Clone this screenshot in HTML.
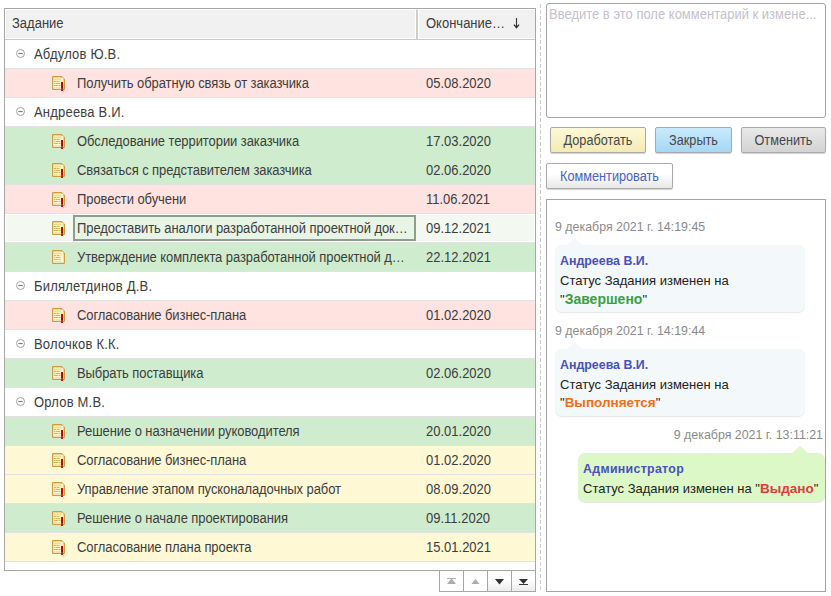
<!DOCTYPE html>
<html><head><meta charset="utf-8">
<style>
*{box-sizing:border-box;margin:0;padding:0}
html,body{width:831px;height:596px;overflow:hidden;background:#fff}
body{position:relative;font-family:"Liberation Sans",sans-serif;font-size:13px;color:#333}
.abs{position:absolute}
#grid{left:4px;top:8px;width:532px;height:563px;border:1px solid #a6a6a6;background:#fff;overflow:hidden}
#hdr{position:absolute;left:0;top:0;width:530px;height:31px;background:#f1f1f1;border-bottom:1px solid #c9c9c9}
#hdr .c{position:absolute;top:0;height:30px;border-top:1px solid #fff;border-left:1px solid #fff;border-bottom:1px solid #fff;line-height:28px;padding-left:8px;color:#3c3c3c}
#hdr .c1{left:0;width:411px;border-right:1px solid #fff}
#hdr .sep{position:absolute;left:411px;top:1px;width:2px;height:29px;background:#cdcdcd}
#hdr .c2{left:413px;width:117px}
#hdr .ht{position:absolute;top:0;line-height:28px;color:#3c3c3c;white-space:nowrap;transform:scaleY(1.1);transform-origin:0 9px}
.row{position:absolute;left:0;width:530px;height:29px;border-bottom:1px solid #e2e2e2;line-height:28px;color:#3d3d3d;white-space:nowrap}
.row .t{position:absolute;left:72px;top:0;letter-spacing:-0.08px;transform:scaleY(1.1);transform-origin:0 9px}
.row .d{position:absolute;left:421px;top:0;transform:scaleY(1.1);transform-origin:0 9px}
.row.g .t{left:29px;letter-spacing:0.2px}
.pk{background:#fee3e0}
.gr{background:#cfecce}
.yl{background:#fff8d5}
.sel{background:#f3f8f1;box-shadow:inset 1px 1px 0 #fff, inset -1px -1px 0 #fff}
.gi{position:absolute;left:11px;top:9px;width:10px;height:10px}
.ic{position:absolute;left:47px;top:7px;width:14px;height:15px}
.focus{position:absolute;left:68px;top:1px;width:343px;height:26px;border:2px solid #8d9e8c;background:#e8f4e6}
.nb{position:absolute;top:570px;width:25px;height:22px;border:1px solid #a6a6a6;background:#fff}
.nb.dk{background:linear-gradient(#fff 0%,#fff 40%,#ececec 100%)}
#dash{left:540px;top:4px;width:1px;height:588px;background:repeating-linear-gradient(#cdcdcd 0 4px,transparent 4px 6px)}
#ta{left:546px;top:3px;width:280px;height:115px;border:1px solid #a3a3a3;border-radius:3px;background:#fff}
#ta span{position:absolute;left:2px;top:2px;color:#c4c2cc;white-space:nowrap;transform:scaleY(1.1);transform-origin:0 3px}
.btn{position:absolute;height:26px;padding-left:0;border:1px solid #a9a9a9;border-radius:2px;line-height:24px;text-align:center;color:#474747;box-shadow:0 1px 1px rgba(0,0,0,.18)}
.bt{display:inline-block;font-size:12.7px;transform:scaleY(1.13);transform-origin:0 8px}
#chat{left:546px;top:199px;width:280px;height:393px;border:1px solid #a3a3a3;background:#fff;overflow:hidden}
.date{position:absolute;font-size:12.4px;color:#8a8a8a;white-space:nowrap;line-height:14px}
.bub{position:absolute;border-radius:7px;box-shadow:0 1px 1px rgba(0,0,0,.10)}
.bub .n{position:absolute;left:5px;font-weight:bold;font-size:12.4px;color:#4850be;white-space:nowrap;line-height:14px}
.bub .s{position:absolute;left:5px;white-space:nowrap;color:#222;line-height:18px}
.bub .s b{font-size:13.5px}
.tail{position:absolute;width:0;height:0;border-left:8px solid transparent;border-right:8px solid transparent}
</style></head><body>

<div id="grid" class="abs">
  <div id="hdr">
    <div class="c c1"></div>
    <div class="sep"></div>
    <div class="c c2"></div>
    <span class="ht" style="left:7px">Задание</span>
    <span class="ht" style="left:421px">Окончание…</span>
    <svg style="position:absolute;left:508px;top:9px" width="7" height="11" viewBox="0 0 7 11"><path d="M3.5 0V9.5" stroke="#333" stroke-width="1.1"/><path d="M1 6.6L3.5 9.6L6 6.6" fill="none" stroke="#333" stroke-width="1.4"/></svg>
  </div>
  <div id="rows"><svg width="0" height="0" style="position:absolute"><defs><linearGradient id="dg" x1="0" y1="0" x2="0" y2="1"><stop offset="0" stop-color="#f9e9a4"/><stop offset="1" stop-color="#fffae0"/></linearGradient></defs></svg><div class="row g" style="top:31px"><svg class="gi" viewBox="0 0 10 10"><circle cx="4.5" cy="4.5" r="4" fill="none" stroke="#a3a3a3" stroke-width="1"/><path d="M2.3 4.5H6.7" stroke="#7a7a7a" stroke-width="1.2"/></svg><span class="t">Абдулов Ю.В.</span></div>
<div class="row pk" style="top:60px"><svg class="ic" viewBox="0 0 14 15"><path d="M1.3 0.6H9.5L12.4 3.5V12.7Q12.4 13.4 11.7 13.4H1.3Q0.6 13.4 0.6 12.7V1.3Q0.6 0.6 1.3 0.6Z" fill="url(#dg)" stroke="#c99d45" stroke-width="1.2"/><path d="M2 3.5h7" stroke="#f0dc98" stroke-width="1"/><path d="M2 11.5h8" stroke="#f3e3a8" stroke-width="1"/><path d="M2 5.5h2.2M4.8 5.5h2.6M2 7.5h1M3.6 7.5h4.6M2 9.5h4M6.6 9.5h2" stroke="#d9b458" stroke-width="1"/><circle cx="10.6" cy="2.5" r="0.85" fill="#fff"/><rect x="9" y="6" width="2" height="6.6" fill="#c40606"/><rect x="9" y="12.6" width="2" height="1" fill="#a00000"/><rect x="9" y="13.6" width="2" height="1.4" fill="#d80a0a"/></svg><span class="t">Получить обратную связь от заказчика</span><span class="d">05.08.2020</span></div>
<div class="row g" style="top:89px"><svg class="gi" viewBox="0 0 10 10"><circle cx="4.5" cy="4.5" r="4" fill="none" stroke="#a3a3a3" stroke-width="1"/><path d="M2.3 4.5H6.7" stroke="#7a7a7a" stroke-width="1.2"/></svg><span class="t">Андреева В.И.</span></div>
<div class="row gr" style="top:118px"><svg class="ic" viewBox="0 0 14 15"><path d="M1.3 0.6H9.5L12.4 3.5V12.7Q12.4 13.4 11.7 13.4H1.3Q0.6 13.4 0.6 12.7V1.3Q0.6 0.6 1.3 0.6Z" fill="url(#dg)" stroke="#c99d45" stroke-width="1.2"/><path d="M2 3.5h7" stroke="#f0dc98" stroke-width="1"/><path d="M2 11.5h8" stroke="#f3e3a8" stroke-width="1"/><path d="M2 5.5h2.2M4.8 5.5h2.6M2 7.5h1M3.6 7.5h4.6M2 9.5h4M6.6 9.5h2" stroke="#d9b458" stroke-width="1"/><circle cx="10.6" cy="2.5" r="0.85" fill="#fff"/><rect x="9" y="6" width="2" height="6.6" fill="#c40606"/><rect x="9" y="12.6" width="2" height="1" fill="#a00000"/><rect x="9" y="13.6" width="2" height="1.4" fill="#d80a0a"/></svg><span class="t">Обследование территории заказчика</span><span class="d">17.03.2020</span></div>
<div class="row gr" style="top:147px"><svg class="ic" viewBox="0 0 14 15"><path d="M1.3 0.6H9.5L12.4 3.5V12.7Q12.4 13.4 11.7 13.4H1.3Q0.6 13.4 0.6 12.7V1.3Q0.6 0.6 1.3 0.6Z" fill="url(#dg)" stroke="#c99d45" stroke-width="1.2"/><path d="M2 3.5h7" stroke="#f0dc98" stroke-width="1"/><path d="M2 11.5h8" stroke="#f3e3a8" stroke-width="1"/><path d="M2 5.5h2.2M4.8 5.5h2.6M2 7.5h1M3.6 7.5h4.6M2 9.5h4M6.6 9.5h2" stroke="#d9b458" stroke-width="1"/><circle cx="10.6" cy="2.5" r="0.85" fill="#fff"/><rect x="9" y="6" width="2" height="6.6" fill="#c40606"/><rect x="9" y="12.6" width="2" height="1" fill="#a00000"/><rect x="9" y="13.6" width="2" height="1.4" fill="#d80a0a"/></svg><span class="t">Связаться с представителем заказчика</span><span class="d">02.06.2020</span></div>
<div class="row pk" style="top:176px"><svg class="ic" viewBox="0 0 14 15"><path d="M1.3 0.6H9.5L12.4 3.5V12.7Q12.4 13.4 11.7 13.4H1.3Q0.6 13.4 0.6 12.7V1.3Q0.6 0.6 1.3 0.6Z" fill="url(#dg)" stroke="#c99d45" stroke-width="1.2"/><path d="M2 3.5h7" stroke="#f0dc98" stroke-width="1"/><path d="M2 11.5h8" stroke="#f3e3a8" stroke-width="1"/><path d="M2 5.5h2.2M4.8 5.5h2.6M2 7.5h1M3.6 7.5h4.6M2 9.5h4M6.6 9.5h2" stroke="#d9b458" stroke-width="1"/><circle cx="10.6" cy="2.5" r="0.85" fill="#fff"/><rect x="9" y="6" width="2" height="6.6" fill="#c40606"/><rect x="9" y="12.6" width="2" height="1" fill="#a00000"/><rect x="9" y="13.6" width="2" height="1.4" fill="#d80a0a"/></svg><span class="t">Провести обучени</span><span class="d">11.06.2021</span></div>
<div class="row sel" style="top:205px"><svg class="ic" viewBox="0 0 14 15"><path d="M1.3 0.6H9.5L12.4 3.5V12.7Q12.4 13.4 11.7 13.4H1.3Q0.6 13.4 0.6 12.7V1.3Q0.6 0.6 1.3 0.6Z" fill="url(#dg)" stroke="#c99d45" stroke-width="1.2"/><path d="M2 3.5h7" stroke="#f0dc98" stroke-width="1"/><path d="M2 11.5h8" stroke="#f3e3a8" stroke-width="1"/><path d="M2 5.5h2.2M4.8 5.5h2.6M2 7.5h1M3.6 7.5h4.6M2 9.5h4M6.6 9.5h2" stroke="#d9b458" stroke-width="1"/><circle cx="10.6" cy="2.5" r="0.85" fill="#fff"/><rect x="9" y="6" width="2" height="6.6" fill="#c40606"/><rect x="9" y="12.6" width="2" height="1" fill="#a00000"/><rect x="9" y="13.6" width="2" height="1.4" fill="#d80a0a"/></svg><div class="focus"></div><span class="t">Предоставить аналоги разработанной проектной док…</span><span class="d">09.12.2021</span></div>
<div class="row gr" style="top:234px"><svg class="ic" viewBox="0 0 14 15"><path d="M1.3 0.6H9.5L12.4 3.5V12.7Q12.4 13.4 11.7 13.4H1.3Q0.6 13.4 0.6 12.7V1.3Q0.6 0.6 1.3 0.6Z" fill="url(#dg)" stroke="#c99d45" stroke-width="1.2"/><path d="M2 3.5h7" stroke="#f0dc98" stroke-width="1"/><path d="M2 11.5h8" stroke="#f3e3a8" stroke-width="1"/><path d="M2 5.5h2.2M4.8 5.5h2.6M2 7.5h1M3.6 7.5h4.6M2 9.5h4M6.6 9.5h2" stroke="#d9b458" stroke-width="1"/><circle cx="10.6" cy="2.5" r="0.85" fill="#fff"/></svg><span class="t">Утверждение комплекта разработанной проектной д…</span><span class="d">22.12.2021</span></div>
<div class="row g" style="top:263px"><svg class="gi" viewBox="0 0 10 10"><circle cx="4.5" cy="4.5" r="4" fill="none" stroke="#a3a3a3" stroke-width="1"/><path d="M2.3 4.5H6.7" stroke="#7a7a7a" stroke-width="1.2"/></svg><span class="t">Билялетдинов Д.В.</span></div>
<div class="row pk" style="top:292px"><svg class="ic" viewBox="0 0 14 15"><path d="M1.3 0.6H9.5L12.4 3.5V12.7Q12.4 13.4 11.7 13.4H1.3Q0.6 13.4 0.6 12.7V1.3Q0.6 0.6 1.3 0.6Z" fill="url(#dg)" stroke="#c99d45" stroke-width="1.2"/><path d="M2 3.5h7" stroke="#f0dc98" stroke-width="1"/><path d="M2 11.5h8" stroke="#f3e3a8" stroke-width="1"/><path d="M2 5.5h2.2M4.8 5.5h2.6M2 7.5h1M3.6 7.5h4.6M2 9.5h4M6.6 9.5h2" stroke="#d9b458" stroke-width="1"/><circle cx="10.6" cy="2.5" r="0.85" fill="#fff"/><rect x="9" y="6" width="2" height="6.6" fill="#c40606"/><rect x="9" y="12.6" width="2" height="1" fill="#a00000"/><rect x="9" y="13.6" width="2" height="1.4" fill="#d80a0a"/></svg><span class="t">Согласование бизнес-плана</span><span class="d">01.02.2020</span></div>
<div class="row g" style="top:321px"><svg class="gi" viewBox="0 0 10 10"><circle cx="4.5" cy="4.5" r="4" fill="none" stroke="#a3a3a3" stroke-width="1"/><path d="M2.3 4.5H6.7" stroke="#7a7a7a" stroke-width="1.2"/></svg><span class="t">Волочков К.К.</span></div>
<div class="row gr" style="top:350px"><svg class="ic" viewBox="0 0 14 15"><path d="M1.3 0.6H9.5L12.4 3.5V12.7Q12.4 13.4 11.7 13.4H1.3Q0.6 13.4 0.6 12.7V1.3Q0.6 0.6 1.3 0.6Z" fill="url(#dg)" stroke="#c99d45" stroke-width="1.2"/><path d="M2 3.5h7" stroke="#f0dc98" stroke-width="1"/><path d="M2 11.5h8" stroke="#f3e3a8" stroke-width="1"/><path d="M2 5.5h2.2M4.8 5.5h2.6M2 7.5h1M3.6 7.5h4.6M2 9.5h4M6.6 9.5h2" stroke="#d9b458" stroke-width="1"/><circle cx="10.6" cy="2.5" r="0.85" fill="#fff"/><rect x="9" y="6" width="2" height="6.6" fill="#c40606"/><rect x="9" y="12.6" width="2" height="1" fill="#a00000"/><rect x="9" y="13.6" width="2" height="1.4" fill="#d80a0a"/></svg><span class="t">Выбрать поставщика</span><span class="d">02.06.2020</span></div>
<div class="row g" style="top:379px"><svg class="gi" viewBox="0 0 10 10"><circle cx="4.5" cy="4.5" r="4" fill="none" stroke="#a3a3a3" stroke-width="1"/><path d="M2.3 4.5H6.7" stroke="#7a7a7a" stroke-width="1.2"/></svg><span class="t">Орлов М.В.</span></div>
<div class="row gr" style="top:408px"><svg class="ic" viewBox="0 0 14 15"><path d="M1.3 0.6H9.5L12.4 3.5V12.7Q12.4 13.4 11.7 13.4H1.3Q0.6 13.4 0.6 12.7V1.3Q0.6 0.6 1.3 0.6Z" fill="url(#dg)" stroke="#c99d45" stroke-width="1.2"/><path d="M2 3.5h7" stroke="#f0dc98" stroke-width="1"/><path d="M2 11.5h8" stroke="#f3e3a8" stroke-width="1"/><path d="M2 5.5h2.2M4.8 5.5h2.6M2 7.5h1M3.6 7.5h4.6M2 9.5h4M6.6 9.5h2" stroke="#d9b458" stroke-width="1"/><circle cx="10.6" cy="2.5" r="0.85" fill="#fff"/><rect x="9" y="6" width="2" height="6.6" fill="#c40606"/><rect x="9" y="12.6" width="2" height="1" fill="#a00000"/><rect x="9" y="13.6" width="2" height="1.4" fill="#d80a0a"/></svg><span class="t">Решение о назначении руководителя</span><span class="d">20.01.2020</span></div>
<div class="row yl" style="top:437px"><svg class="ic" viewBox="0 0 14 15"><path d="M1.3 0.6H9.5L12.4 3.5V12.7Q12.4 13.4 11.7 13.4H1.3Q0.6 13.4 0.6 12.7V1.3Q0.6 0.6 1.3 0.6Z" fill="url(#dg)" stroke="#c99d45" stroke-width="1.2"/><path d="M2 3.5h7" stroke="#f0dc98" stroke-width="1"/><path d="M2 11.5h8" stroke="#f3e3a8" stroke-width="1"/><path d="M2 5.5h2.2M4.8 5.5h2.6M2 7.5h1M3.6 7.5h4.6M2 9.5h4M6.6 9.5h2" stroke="#d9b458" stroke-width="1"/><circle cx="10.6" cy="2.5" r="0.85" fill="#fff"/><rect x="9" y="6" width="2" height="6.6" fill="#c40606"/><rect x="9" y="12.6" width="2" height="1" fill="#a00000"/><rect x="9" y="13.6" width="2" height="1.4" fill="#d80a0a"/></svg><span class="t">Согласование бизнес-плана</span><span class="d">01.02.2020</span></div>
<div class="row yl" style="top:466px"><svg class="ic" viewBox="0 0 14 15"><path d="M1.3 0.6H9.5L12.4 3.5V12.7Q12.4 13.4 11.7 13.4H1.3Q0.6 13.4 0.6 12.7V1.3Q0.6 0.6 1.3 0.6Z" fill="url(#dg)" stroke="#c99d45" stroke-width="1.2"/><path d="M2 3.5h7" stroke="#f0dc98" stroke-width="1"/><path d="M2 11.5h8" stroke="#f3e3a8" stroke-width="1"/><path d="M2 5.5h2.2M4.8 5.5h2.6M2 7.5h1M3.6 7.5h4.6M2 9.5h4M6.6 9.5h2" stroke="#d9b458" stroke-width="1"/><circle cx="10.6" cy="2.5" r="0.85" fill="#fff"/><rect x="9" y="6" width="2" height="6.6" fill="#c40606"/><rect x="9" y="12.6" width="2" height="1" fill="#a00000"/><rect x="9" y="13.6" width="2" height="1.4" fill="#d80a0a"/></svg><span class="t">Управление этапом пусконаладочных работ</span><span class="d">08.09.2020</span></div>
<div class="row gr" style="top:495px"><svg class="ic" viewBox="0 0 14 15"><path d="M1.3 0.6H9.5L12.4 3.5V12.7Q12.4 13.4 11.7 13.4H1.3Q0.6 13.4 0.6 12.7V1.3Q0.6 0.6 1.3 0.6Z" fill="url(#dg)" stroke="#c99d45" stroke-width="1.2"/><path d="M2 3.5h7" stroke="#f0dc98" stroke-width="1"/><path d="M2 11.5h8" stroke="#f3e3a8" stroke-width="1"/><path d="M2 5.5h2.2M4.8 5.5h2.6M2 7.5h1M3.6 7.5h4.6M2 9.5h4M6.6 9.5h2" stroke="#d9b458" stroke-width="1"/><circle cx="10.6" cy="2.5" r="0.85" fill="#fff"/><rect x="9" y="6" width="2" height="6.6" fill="#c40606"/><rect x="9" y="12.6" width="2" height="1" fill="#a00000"/><rect x="9" y="13.6" width="2" height="1.4" fill="#d80a0a"/></svg><span class="t">Решение о начале проектирования</span><span class="d">09.11.2020</span></div>
<div class="row yl" style="top:524px"><svg class="ic" viewBox="0 0 14 15"><path d="M1.3 0.6H9.5L12.4 3.5V12.7Q12.4 13.4 11.7 13.4H1.3Q0.6 13.4 0.6 12.7V1.3Q0.6 0.6 1.3 0.6Z" fill="url(#dg)" stroke="#c99d45" stroke-width="1.2"/><path d="M2 3.5h7" stroke="#f0dc98" stroke-width="1"/><path d="M2 11.5h8" stroke="#f3e3a8" stroke-width="1"/><path d="M2 5.5h2.2M4.8 5.5h2.6M2 7.5h1M3.6 7.5h4.6M2 9.5h4M6.6 9.5h2" stroke="#d9b458" stroke-width="1"/><circle cx="10.6" cy="2.5" r="0.85" fill="#fff"/><rect x="9" y="6" width="2" height="6.6" fill="#c40606"/><rect x="9" y="12.6" width="2" height="1" fill="#a00000"/><rect x="9" y="13.6" width="2" height="1.4" fill="#d80a0a"/></svg><span class="t">Согласование плана проекта</span><span class="d">15.01.2021</span></div></div>
</div>

<div class="nb" style="left:439px"><svg style="position:absolute;left:7px;top:7px" width="9" height="6" viewBox="0 0 9 6"><rect x="0" y="0" width="9" height="1" fill="#acacac"/><path d="M4.5 0.6L9 6H0Z" fill="#acacac"/></svg></div>
<div class="nb" style="left:463px"><svg style="position:absolute;left:7px;top:7.5px" width="9" height="5.5" viewBox="0 0 9 5.5"><path d="M4.5 0L9 5.5H0Z" fill="#acacac"/></svg></div>
<div class="nb dk" style="left:487px"><svg style="position:absolute;left:7px;top:8px" width="9" height="5.5" viewBox="0 0 9 5.5"><path d="M0 0H9L4.5 5.5Z" fill="#333"/></svg></div>
<div class="nb dk" style="left:511px"><svg style="position:absolute;left:7px;top:8px" width="9" height="6" viewBox="0 0 9 6"><path d="M0 0H9L4.5 5Z" fill="#333"/><rect x="0" y="5" width="9" height="1" fill="#333"/></svg></div>

<div id="dash" class="abs"></div>
<div id="ta" class="abs"><span>Введите в это поле комментарий к измене...</span></div>

<div class="btn" style="left:550px;top:127px;width:96px;background:linear-gradient(#fdf9d8,#f4eab4)"><span class="bt">Доработать</span></div>
<div class="btn" style="left:655px;top:127px;width:77px;background:linear-gradient(#c9eafc,#a5d7f4)"><span class="bt">Закрыть</span></div>
<div class="btn" style="left:741px;top:127px;width:85px;background:linear-gradient(#e9e9e9,#d3d3d3)"><span class="bt">Отменить</span></div>
<div class="btn" style="left:546px;top:163px;width:127px;background:linear-gradient(#fff 40%,#e8e8e8);color:#4664c6"><span class="bt">Комментировать</span></div>

<div id="chat" class="abs">
  <div class="date" style="left:8px;top:20px">9 декабря 2021 г. 14:19:45</div>
  <div class="tail" style="left:20px;top:38px;border-bottom:7px solid #f3f8fb"></div>
  <div class="bub" style="left:8px;top:45px;width:250px;height:67px;background:#f3f8fb">
    <div class="n" style="top:9px">Андреева В.И.</div>
    <div class="s" style="top:27px">Статус Задания изменен на<br>"<b style="color:#3d9e3d;font-size:14px">Завершено</b>"</div>
  </div>
  <div class="date" style="left:8px;top:124px">9 декабря 2021 г. 14:19:44</div>
  <div class="tail" style="left:20px;top:142px;border-bottom:7px solid #f3f8fb"></div>
  <div class="bub" style="left:8px;top:149px;width:250px;height:67px;background:#f3f8fb">
    <div class="n" style="top:9px">Андреева В.И.</div>
    <div class="s" style="top:27px">Статус Задания изменен на<br>"<b style="color:#f26e14">Выполняется</b>"</div>
  </div>
  <div class="date" style="right:2px;top:228px">9 декабря 2021 г. 13:11:21</div>
  <div class="tail" style="left:245px;top:246px;border-bottom:7px solid #dcf8c6"></div>
  <div class="bub" style="left:31px;top:253px;width:247px;height:49px;background:#dcf8c6">
    <div class="n" style="top:9px;left:5px;letter-spacing:0.3px">Администратор</div>
    <div class="s" style="top:27px;left:5px">Статус Задания изменен на "<b style="color:#e03a3a">Выдано</b>"</div>
  </div>
</div>

</body></html>
